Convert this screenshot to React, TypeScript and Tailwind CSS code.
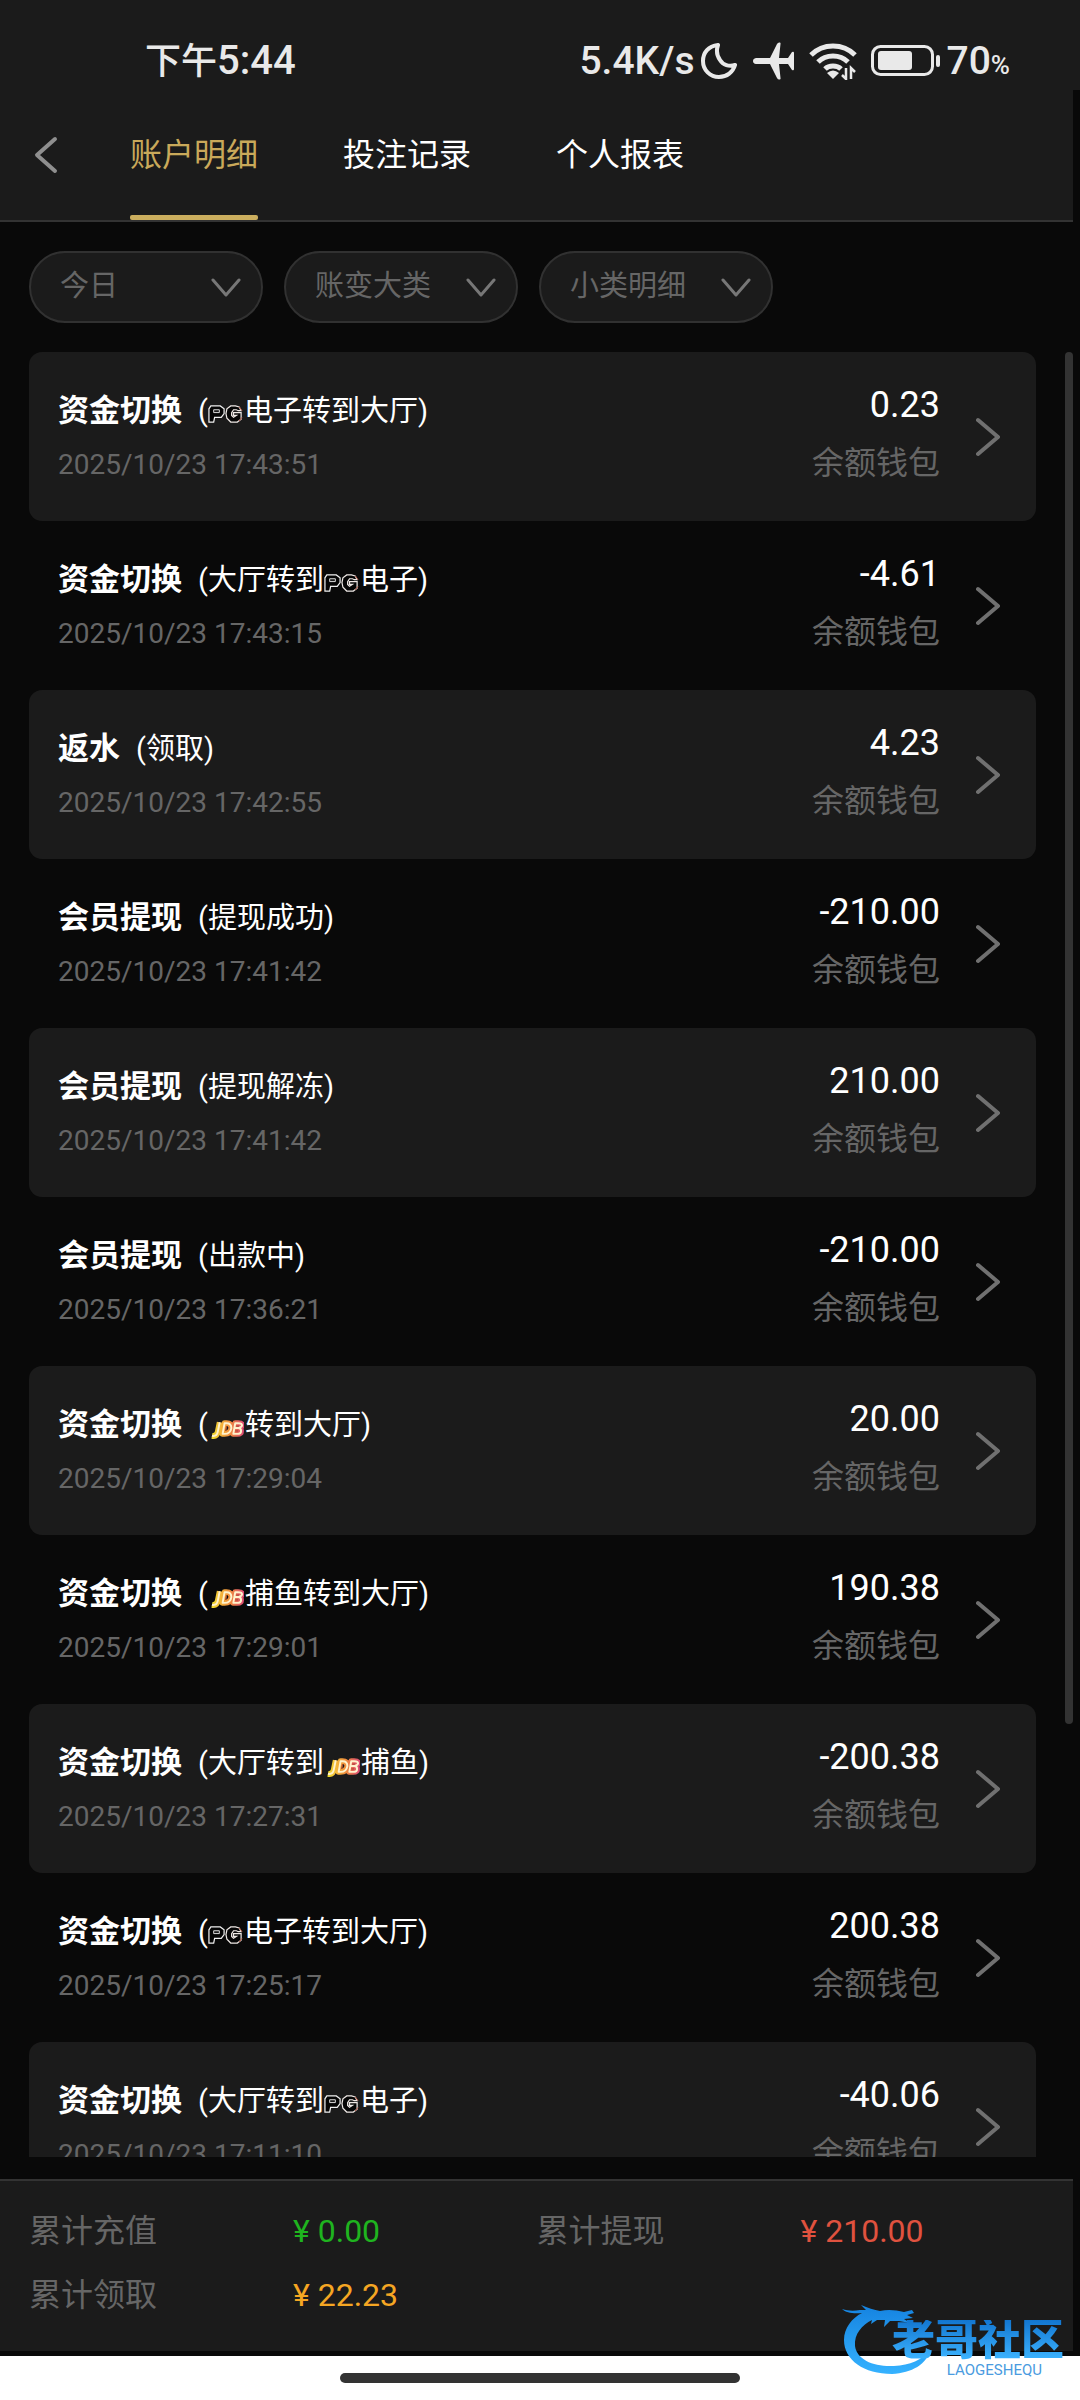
import React from "react";

type Part = string | { logo: "pg" | "jdb" };
type Entry = { title: string; note: Part[]; time: string; amount: string };

const PG: Part = { logo: "pg" };
const JDB: Part = { logo: "jdb" };

const entries: Entry[] = [
  { title: "资金切换", note: ["(", PG, "电子转到大厅)"], time: "2025/10/23 17:43:51", amount: "0.23" },
  { title: "资金切换", note: ["(大厅转到", PG, "电子)"], time: "2025/10/23 17:43:15", amount: "-4.61" },
  { title: "返水", note: ["(领取)"], time: "2025/10/23 17:42:55", amount: "4.23" },
  { title: "会员提现", note: ["(提现成功)"], time: "2025/10/23 17:41:42", amount: "-210.00" },
  { title: "会员提现", note: ["(提现解冻)"], time: "2025/10/23 17:41:42", amount: "210.00" },
  { title: "会员提现", note: ["(出款中)"], time: "2025/10/23 17:36:21", amount: "-210.00" },
  { title: "资金切换", note: ["(", JDB, "转到大厅)"], time: "2025/10/23 17:29:04", amount: "20.00" },
  { title: "资金切换", note: ["(", JDB, "捕鱼转到大厅)"], time: "2025/10/23 17:29:01", amount: "190.38" },
  { title: "资金切换", note: ["(大厅转到", JDB, "捕鱼)"], time: "2025/10/23 17:27:31", amount: "-200.38" },
  { title: "资金切换", note: ["(", PG, "电子转到大厅)"], time: "2025/10/23 17:25:17", amount: "200.38" },
  { title: "资金切换", note: ["(大厅转到", PG, "电子)"], time: "2025/10/23 17:11:10", amount: "-40.06" },
];

const filters = [
  { id: "date", label: "日期", value: "今日" },
  { id: "group", label: "账变大类", value: "账变大类" },
  { id: "kind", label: "小类明细", value: "小类明细" },
];

const totals = [
  { label: "累计充值", value: "0.00", color: "text-[#1fb41f]" },
  { label: "累计提现", value: "210.00", color: "text-[#e0523f]" },
  { label: "累计领取", value: "22.23", color: "text-[#f5a623]" },
];

function PgLogo() {
  return (
    <svg width="35" height="18" viewBox="0 0 37 19" className="mr-px mt-[6px] shrink-0" role="img" aria-label="PG">
      <path
        d="M1 18V4l2-3h10l4 3v5l-3 4H7l-1 5z"
        fill="#050505" stroke="#f0f0f0" strokeWidth="1.3"
      />
      <path d="M6 5h6v3H6z" fill="#1b1b1b" stroke="#e4e4e4" strokeWidth="1" />
      <path
        d="M35 6l-2-4-4-1h-5l-4 3-1 5 1 5 4 4h7l4-3V8h-8v3h3l-3 2-2-2V8l2-3h3l2 1z"
        fill="#050505" stroke="#efe9e6" strokeWidth="1.3"
      />
      <path d="M33 2l3 4M36 13l-3 4" stroke="#b4503c" strokeWidth="1" />
    </svg>
  );
}

function JdbLogo() {
  const shape = "M10 3L8 13q-1 5-6 4M15 4l-2 11h2q6 0 7-6 0-5-5-5zM26 4l-2 11h4q4 0 4-3t-3-3q4-1 4-3t-4-2zM26 9h3";
  return (
    <svg width="34" height="21" viewBox="0 0 35 21" className="ml-[2px] mr-px mt-[9px] shrink-0" role="img" aria-label="JDB">
      <defs>
        <linearGradient id="jdb" gradientUnits="userSpaceOnUse" x1="0" x2="35" y1="0" y2="0">
          <stop offset="0" stopColor="#efe62a" />
          <stop offset="0.3" stopColor="#f4b83a" />
          <stop offset="0.6" stopColor="#f08a3e" />
          <stop offset="1" stopColor="#dc4a78" />
        </linearGradient>
      </defs>
      <g fill="none" strokeLinejoin="round">
        <path d={shape} stroke="url(#jdb)" strokeWidth="6" />
        <path d={shape} stroke="#fff2cc" strokeWidth="2" />
        <path d="M17 7l-1 5M27 7h3M26 12h3" stroke="#a33a30" strokeWidth="1" />
      </g>
    </svg>
  );
}

function Chevron({ dir, className }: { dir: "left" | "right" | "down"; className: string }) {
  if (dir === "down")
    return (
      <svg width="30" height="20" viewBox="0 0 30 20" className={className} aria-hidden="true">
        <path d="M2 3l13 15L28 3" fill="none" stroke="currentColor" strokeWidth="3" strokeLinecap="round" strokeLinejoin="round" />
      </svg>
    );
  return (
    <svg width="24" height="40" viewBox="0 0 24 40" className={className} aria-hidden="true">
      <path
        d={dir === "left" ? "M21 4L3 20l18 16" : "M2 3l20 17L2 37"}
        fill="none" stroke="currentColor" strokeWidth="4" strokeLinecap="round" strokeLinejoin="round"
      />
    </svg>
  );
}

function StatusBar() {
  return (
    <div className="flex h-[90px] shrink-0 items-center justify-between bg-[#1b1b1b] pl-[145px] pr-[70px] pt-[32px] text-[#e9e9e9]">
      <span className="text-[36px] font-medium leading-none">
        下午<span className="text-[40px]">5:44</span>
      </span>
      <div className="flex items-center">
        <span className="text-[39px] font-medium leading-none">5.4K/s</span>
        <svg width="36" height="38" viewBox="0 0 36 38" className="ml-1.5" role="img" aria-label="勿扰">
          <path d="M17 3C7 4 2 11 2 19c0 9 7 16 16 16 8 0 14-5 16-12-6 2-12 0-15-5-3-4-4-9-2-15z" fill="none" stroke="currentColor" strokeWidth="4" strokeLinejoin="round" />
        </svg>
        <svg width="42" height="38" viewBox="0 0 42 38" className="ml-4" role="img" aria-label="飞行模式">
          <path d="M3 16h14L24 2q1-2 3-1.500.8.500.5 1.500L26 16h9l4-6q2-1 2 1v16q0 2-2 1l-4-6h-9l1.500 14q.3 1-.5 1.500-2 .5-3-1.500L17 22H3q-3-.5-3-3t3-3z" fill="currentColor" />
        </svg>
        <svg width="48" height="38" viewBox="0 0 48 38" className="ml-3.5" role="img" aria-label="无线网络">
          <g fill="none" stroke="currentColor" strokeWidth="5">
            <path d="M2 13C14 1 34 1 46 13" />
            <path d="M9 20C17 12 31 12 39 20" />
            <path d="M16 27c4-4 12-4 16 0" />
          </g>
          <path d="M18 31q6-5 12 0l-6 6z" fill="currentColor" />
          <path d="M37 26v11l-4-4M42 37V26l4 4" stroke="currentColor" strokeWidth="2.500" fill="none" />
        </svg>
        <svg width="70" height="32" viewBox="0 0 70 32" className="ml-3.5" role="img" aria-label="电池">
          <rect x="1.500" y="1.500" width="60" height="28" rx="8" fill="none" stroke="currentColor" strokeWidth="3" />
          <rect x="7" y="6" width="34" height="19" rx="3" fill="currentColor" />
          <path d="M67 12v8" stroke="currentColor" strokeWidth="4" strokeLinecap="round" />
        </svg>
        <span className="ml-1.5 text-[39px] font-medium leading-none">
          70<span className="text-[26px]">%</span>
        </span>
      </div>
    </div>
  );
}

function Header() {
  const tabs = ["账户明细", "投注记录", "个人报表"];
  return (
    <header className="flex h-[132px] shrink-0 border-b-2 border-[#333333] bg-[#1b1b1b] pl-[34px]">
      <button type="button" aria-label="返回" className="mt-[45px] h-[40px] text-[#8f8f8f]">
        <Chevron dir="left" className="" />
      </button>
      <nav className="ml-[72px] flex gap-[85px]">
        {tabs.map((tab, i) => (
          <button
            key={tab}
            type="button"
            className={
              i === 0
                ? "relative flex h-full items-start pt-[45px] text-[32px] leading-[40px] text-[#c9a95a]"
                : "relative flex h-full items-start pt-[45px] text-[32px] leading-[40px] text-white"
            }
          >
            {tab}
            {i === 0 && <span className="absolute inset-x-0 bottom-0 h-[5px] rounded-[2px] bg-[#cbae5e]" />}
          </button>
        ))}
      </nav>
    </header>
  );
}

function Filters() {
  return (
    <div className="flex shrink-0 gap-[21px] pb-[29px] pl-[29px] pt-[29px]">
      {filters.map((f) => (
        <div key={f.id} className="relative w-[234px]">
          <select
            name={f.id}
            aria-label={f.label}
            defaultValue={f.value}
            className="h-[72px] w-full appearance-none rounded-full border-2 border-[#313131] bg-[#1b1b1b] pl-[29px] pr-[50px] text-[29px] text-[#666666]"
          >
            <option>{f.value}</option>
          </select>
          <Chevron dir="down" className="pointer-events-none absolute right-[22px] top-[26px] text-[#777777]" />
        </div>
      ))}
    </div>
  );
}

function Row({ entry, shaded }: { entry: Entry; shaded: boolean }) {
  return (
    <li>
      <button
        type="button"
        className={
          shaded
            ? "flex h-[169px] w-full items-center rounded-[13px] bg-[#1b1b1b] pl-[29px] pr-[36px] text-left"
            : "flex h-[169px] w-full items-center pl-[29px] pr-[36px] text-left"
        }
      >
        <span className="flex flex-1 flex-col gap-[14px] pt-[2px]">
          <span className="flex items-center text-white">
            <span className="text-[31px] font-bold leading-[40px]">{entry.title}</span>
            <span className="ml-[16px] flex items-center text-[29px] leading-[40px]">
              {entry.note.map((p, i) =>
                typeof p === "string" ? (
                  <span key={i}>{p}</span>
                ) : p.logo === "pg" ? (
                  <PgLogo key={i} />
                ) : (
                  <JdbLogo key={i} />
                ),
              )}
            </span>
          </span>
          <span className="text-[28px] leading-[40px] text-[#666666]">{entry.time}</span>
        </span>
        <span className="mr-[36px] flex flex-col items-end gap-[18px] pb-[6px]">
          <span className="text-[36px] leading-[40px] text-white">{entry.amount}</span>
          <span className="text-[32px] leading-[40px] text-[#666666]">余额钱包</span>
        </span>
        <Chevron dir="right" className="text-[#707070]" />
      </button>
    </li>
  );
}

function Watermark() {
  return (
    <div className="pointer-events-none absolute bottom-[20px] right-[16px] h-[80px] w-[222px]">
      <svg width="100" height="80" viewBox="0 0 100 80" className="absolute left-0 top-0" aria-hidden="true">
        <defs>
          <linearGradient id="wm" x1="0" x2="0" y1="0" y2="1">
            <stop offset="0" stopColor="#1583e0" />
            <stop offset="1" stopColor="#35b2ff" />
          </linearGradient>
        </defs>
        <path
          d="M0 9c6 2 12 2 18 1h6l-5-5c7 3 13 5 19 6 8-2 16-1 24 1l8-2 2 3-7 2 6 3-9 1 6 4-11-2h-9l-6 6 1-7h-8l-6 4 1-4C20 25 12 34 13 46 15 60 32 67 52 66 68 65 80 60 88 50 85 64 70 73 50 74 22 74 2 60 2 40 2 28 10 18 20 13 12 14 4 13 0 9z"
          fill="url(#wm)"
        />
      </svg>
      <span className="absolute right-0 top-[20px] whitespace-nowrap bg-linear-to-b from-[#1276d0] to-[#3db4ff] bg-clip-text text-[43px] font-black leading-[40px] text-transparent">
        老哥社区
      </span>
      <span className="absolute right-[22px] top-[63px] text-[15px] leading-[14px] text-[#4a9be0]">LAOGESHEQU</span>
    </div>
  );
}

export default function App() {
  return (
    <div className="relative flex h-screen flex-col overflow-hidden bg-[#090909] font-[Roboto,'Noto_Sans_CJK_SC',sans-serif]">
      <StatusBar />
      <div className="flex min-h-0 flex-1 flex-col pb-[5px] pr-[7px]">
        <Header />
        <Filters />
        <main className="flex min-h-0 flex-1 justify-between overflow-hidden pl-[29px]">
          <ul className="mr-[29px] flex-1">
            {entries.map((entry, i) => (
              <Row key={i} entry={entry} shaded={i % 2 === 0} />
            ))}
          </ul>
          <div className="h-[76%] w-[8px] rounded-full bg-[#333333]" />
        </main>
        <footer className="mt-[22px] grid h-[172px] shrink-0 grid-cols-2 content-start gap-y-[24px] border-t-2 border-[#333333] bg-[#1b1b1b] px-[29px] pt-[30px]">
          {totals.map((t) => (
            <dl key={t.label} className="flex text-[32px] leading-[40px]">
              <dt className="w-[52%] text-[#666666]">{t.label}</dt>
              <dd className={t.color}>
                <span className="mr-[8px]">¥</span>
                {t.value}
              </dd>
            </dl>
          ))}
        </footer>
      </div>
      <div className="flex h-[44px] shrink-0 justify-center bg-white pt-[17px]">
        <div className="h-[10px] w-[37%] rounded-full bg-[#333333]" />
      </div>
      <Watermark />
    </div>
  );
}
